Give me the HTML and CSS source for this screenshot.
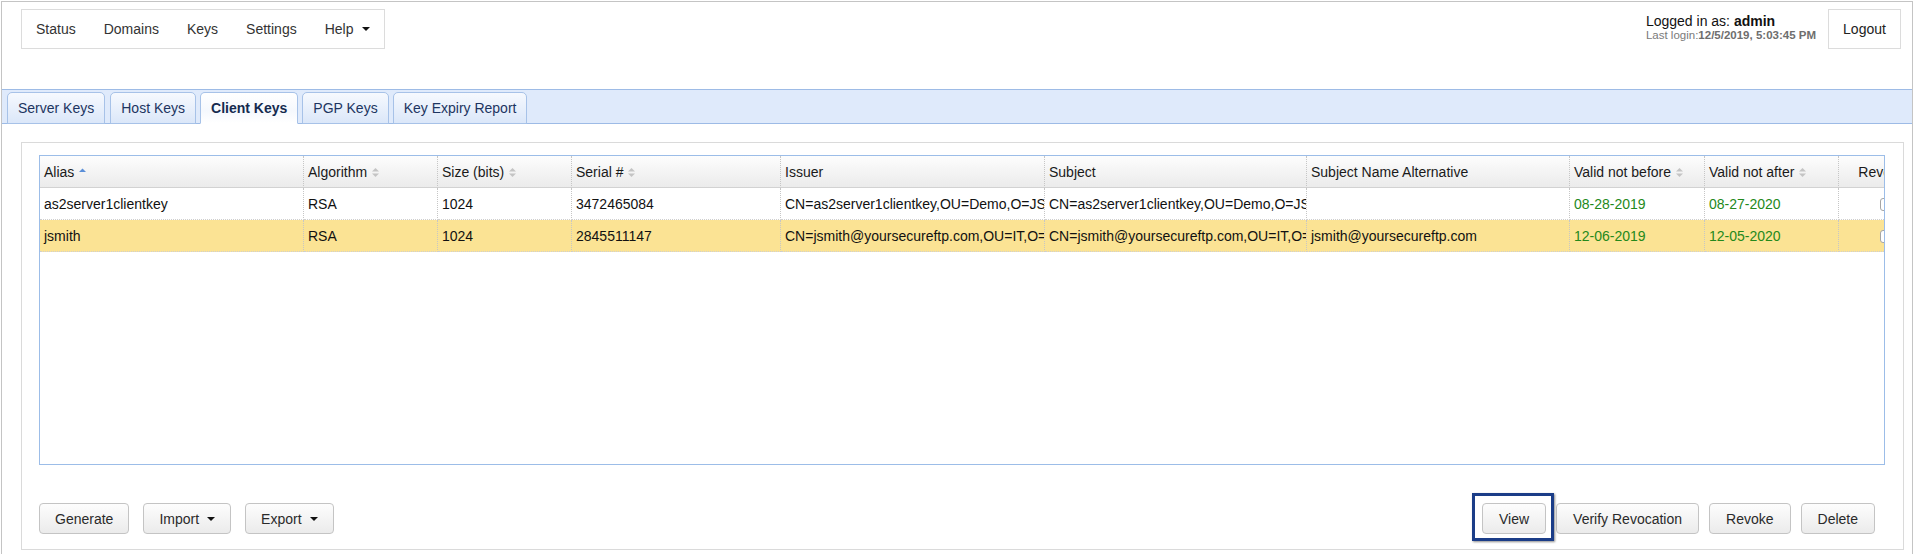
FILE: index.html
```html
<!DOCTYPE html>
<html lang="en">
<head>
<meta charset="utf-8">
<title>Client Keys</title>
<link rel="stylesheet" href="styles.css">
</head>
<body>
<div class="frame">
  <header class="topbar">
    <nav class="mainnav">
      <a class="nav-item">Status</a>
      <a class="nav-item">Domains</a>
      <a class="nav-item">Keys</a>
      <a class="nav-item">Settings</a>
      <a class="nav-item">Help<span class="caret"></span></a>
    </nav>
    <div class="account">
      <div class="who">
        <div class="logged">Logged in as: <b>admin</b></div>
        <div class="last">Last login:<b>12/5/2019, 5:03:45 PM</b></div>
      </div>
      <button class="logout">Logout</button>
    </div>
  </header>

  <div class="tabbar">
    <div class="tab">Server Keys</div>
    <div class="tab">Host Keys</div>
    <div class="tab active">Client Keys</div>
    <div class="tab">PGP Keys</div>
    <div class="tab">Key Expiry Report</div>
  </div>

  <section class="panel">
    <div class="grid-wrap">
      <table class="keys">
        <thead>
          <tr>
            <th class="c-alias">Alias<svg class="sort" width="7" height="11" viewBox="0 0 7 11"><polygon points="0,5 3.5,1.5 7,5" fill="#5b8fd8"/></svg></th>
            <th class="c-alg">Algorithm<svg class="sort" width="7" height="11" viewBox="0 0 7 11"><polygon points="0,4.5 3.5,1 7,4.5" fill="#c4c4c4"/><polygon points="0,6.5 3.5,10 7,6.5" fill="#c4c4c4"/></svg></th>
            <th class="c-size">Size (bits)<svg class="sort" width="7" height="11" viewBox="0 0 7 11"><polygon points="0,4.5 3.5,1 7,4.5" fill="#c4c4c4"/><polygon points="0,6.5 3.5,10 7,6.5" fill="#c4c4c4"/></svg></th>
            <th class="c-serial">Serial #<svg class="sort" width="7" height="11" viewBox="0 0 7 11"><polygon points="0,4.5 3.5,1 7,4.5" fill="#c4c4c4"/><polygon points="0,6.5 3.5,10 7,6.5" fill="#c4c4c4"/></svg></th>
            <th class="c-issuer">Issuer</th>
            <th class="c-subject">Subject</th>
            <th class="c-sna">Subject Name Alternative</th>
            <th class="c-vnb">Valid not before<svg class="sort" width="7" height="11" viewBox="0 0 7 11"><polygon points="0,4.5 3.5,1 7,4.5" fill="#c4c4c4"/><polygon points="0,6.5 3.5,10 7,6.5" fill="#c4c4c4"/></svg></th>
            <th class="c-vna">Valid not after<svg class="sort" width="7" height="11" viewBox="0 0 7 11"><polygon points="0,4.5 3.5,1 7,4.5" fill="#c4c4c4"/><polygon points="0,6.5 3.5,10 7,6.5" fill="#c4c4c4"/></svg></th>
            <th class="c-rev center">Revoked</th>
          </tr>
        </thead>
        <tbody>
          <tr>
            <td>as2server1clientkey</td>
            <td>RSA</td>
            <td>1024</td>
            <td>3472465084</td>
            <td>CN=as2server1clientkey,OU=Demo,O=JSCAPE,L=Chicago,ST=IL,C=US</td>
            <td>CN=as2server1clientkey,OU=Demo,O=JSCAPE,L=Chicago,ST=IL,C=US</td>
            <td></td>
            <td class="date">08-28-2019</td>
            <td class="date">08-27-2020</td>
            <td class="center"><span class="check"></span></td>
          </tr>
          <tr class="selected">
            <td>jsmith</td>
            <td>RSA</td>
            <td>1024</td>
            <td>2845511147</td>
            <td>CN=jsmith@yoursecureftp.com,OU=IT,O=JSCAPE,L=Chicago,C=US</td>
            <td>CN=jsmith@yoursecureftp.com,OU=IT,O=JSCAPE,L=Chicago,C=US</td>
            <td>jsmith@yoursecureftp.com</td>
            <td class="date">12-06-2019</td>
            <td class="date">12-05-2020</td>
            <td class="center"><span class="check"></span></td>
          </tr>
        </tbody>
      </table>
    </div>

    <div class="actions">
      <div class="group group-left">
        <button class="btn">Generate</button>
        <button class="btn">Import<span class="caret"></span></button>
        <button class="btn">Export<span class="caret"></span></button>
      </div>
      <div class="group group-right">
        <span class="focus-wrap"><button class="btn">View</button></span>
        <button class="btn">Verify Revocation</button>
        <button class="btn">Revoke</button>
        <button class="btn">Delete</button>
      </div>
    </div>
  </section>
</div>
</body>
</html>
```

FILE: styles.css
```css
* { box-sizing: border-box; }

html, body {
  margin: 0;
  padding: 0;
  background: #ffffff;
}

body {
  font-family: "Liberation Sans", Arial, Helvetica, sans-serif;
  font-size: 14px;
  color: #222;
}

.frame {
  margin: 1px 1px 0 1px;
  border: 1px solid #c4c4c4;
  border-bottom: none;
  min-height: 600px;
}

/* ---------- top bar ---------- */
.topbar {
  height: 87px;
  display: flex;
  justify-content: space-between;
  align-items: flex-start;
  padding: 7px 11px 0 19px;
}

.mainnav {
  display: flex;
  height: 40px;
  border: 1px solid #dcdcdc;
  background: #fff;
}

.nav-item {
  display: flex;
  align-items: center;
  padding: 0 14px;
  color: #333;
  line-height: 38px;
  white-space: nowrap;
}

.caret {
  display: inline-block;
  width: 0;
  height: 0;
  border-left: 4px solid transparent;
  border-right: 4px solid transparent;
  border-top: 4px solid #111;
  margin-left: 9px;
  vertical-align: middle;
}

.account {
  display: flex;
  align-items: flex-start;
  gap: 12px;
}

.who {
  margin-top: 4px;
  white-space: nowrap;
}

.logged {
  font-size: 14px;
  line-height: 16px;
  color: #111;
}

.last {
  font-size: 11.5px;
  line-height: 13px;
  color: #7a7a7a;
}

.last b { color: #6e6e6e; }

.logout {
  height: 40px;
  width: 73px;
  border: 1px solid #dcdcdc;
  background: #fff;
  font-family: inherit;
  font-size: 14px;
  color: #222;
  padding: 0;
}

/* ---------- tabs ---------- */
.tabbar {
  display: flex;
  align-items: flex-end;
  gap: 4px;
  padding: 2px 0 0 5px;
  background: #dfeafb;
  border-top: 1px solid #9dbbe6;
  border-bottom: 1px solid #9dbbe6;
}

.tab {
  height: 32px;
  margin-bottom: -1px;
  padding: 0 10px;
  display: flex;
  align-items: center;
  border: 1px solid #a7c2e8;
  border-radius: 5px 5px 0 0;
  background: linear-gradient(#f6f9fe, #dbe7f9);
  color: #1d3561;
  white-space: nowrap;
}

.tab:first-child { margin-right: 1px; }

.tab.active {
  background: linear-gradient(#ffffff 0%, #f5f8fd 60%, #ffffff 100%);
  border-bottom-color: #ffffff;
  font-weight: bold;
  color: #152a4f;
}

/* ---------- panel ---------- */
.panel {
  margin: 18px 8px 0 19px;
  border: 1px solid #dadada;
  padding: 12px 18px 15px 17px;
}

.grid-wrap {
  height: 310px;
  border: 1px solid #9cbde8;
  overflow: hidden;
  background: #fff;
}

.keys {
  width: 1894px;
  table-layout: fixed;
  border-collapse: separate;
  border-spacing: 0;
}

.keys th,
.keys td {
  height: 32px;
  padding: 0 4px;
  white-space: nowrap;
  overflow: hidden;
  text-align: left;
  vertical-align: middle;
  border-right: 1px dotted #c6c6c6;
}

.keys th {
  font-weight: normal;
  color: #1a1a1a;
  background: linear-gradient(#fdfdfd, #ebebeb);
  border-bottom: 1px solid #d2d2d2;
}

.keys td {
  color: #111;
  border-bottom: 1px dotted #cfcfcf;
}

.keys .center { text-align: center; }

.c-alias { width: 264px; }
.c-alg { width: 134px; }
.c-size { width: 134px; }
.c-serial { width: 209px; }
.c-issuer { width: 264px; }
.c-subject { width: 262px; }
.c-sna { width: 263px; }
.c-vnb { width: 135px; }
.c-vna { width: 134px; }
.c-rev { width: 95px; }

.sort {
  margin-left: 5px;
  vertical-align: -1px;
}

.keys td.date { color: #24891b; }

.keys tr.selected td { background: #fbe394; }

.check {
  display: inline-block;
  width: 13px;
  height: 13px;
  border: 1px solid #a5a5a5;
  border-radius: 3px;
  background: #fff;
  vertical-align: middle;
}

/* ---------- actions ---------- */
.actions {
  margin-top: 38px;
  display: flex;
  justify-content: space-between;
  padding-right: 10px;
}

.group {
  display: flex;
  align-items: center;
}

.group-left { gap: 14px; }
.group-right { gap: 10px; }

.btn {
  height: 31px;
  padding: 0 15px;
  border: 1px solid #c4c4c4;
  border-radius: 4px;
  background: linear-gradient(#fdfdfd, #ebebeb);
  font-family: inherit;
  font-size: 14px;
  color: #2a2a2a;
  display: inline-flex;
  align-items: center;
  white-space: nowrap;
}

.group-right .btn { padding: 0 16px; }

.btn .caret { margin-left: 8px; }

.focus-wrap {
  position: relative;
  display: inline-flex;
}

.focus-wrap::after {
  content: "";
  position: absolute;
  top: -10px;
  left: -10px;
  right: -8px;
  bottom: -7px;
  border: 3px solid #1b3d88;
  box-shadow: 1px 1px 2px rgba(0, 0, 0, 0.45);
  pointer-events: none;
}
```
